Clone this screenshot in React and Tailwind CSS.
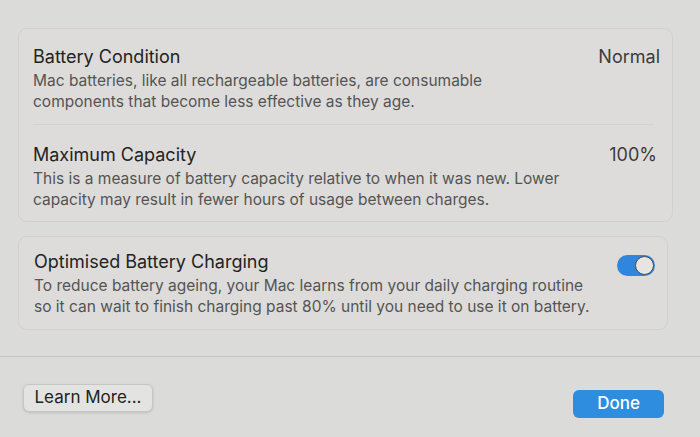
import React from 'react';

function Toggle() {
  return (
    <div className="w-[38px] h-[21px] rounded-full bg-[#2f86dc] flex items-center justify-end p-[1px]">
      <div className="w-[19px] h-[19px] rounded-full bg-[#e6e5e2] border border-[#4a4a4a]" />
    </div>
  );
}

function Row({ title, value, lines, right }) {
  return (
    <div className="flex justify-between">
      <div>
        <div className="text-[18px] leading-[22px] text-[#232323]">{title}</div>
        <div className="mt-[2px] text-[15.5px] leading-[21px] text-[#545454]">
          {lines.map((l) => (
            <div key={l}>{l}</div>
          ))}
        </div>
      </div>
      {value && <div className="text-[18px] leading-[22px] text-[#3c3c3c]">{value}</div>}
      {right}
    </div>
  );
}

export default function App() {
  return (
    <div
      className="w-[700px] h-[437px] bg-[#dbdbd9] overflow-hidden flex flex-col"
      style={{ fontFamily: 'Inter, "Noto Sans", sans-serif' }}
    >
      <div className="ml-[18px] mt-[28px] w-[655px] h-[194px] rounded-[9px] border border-[#d0d0cd] bg-[#dddcda] pl-[14px] pr-[12px] pt-[17px]">
        <Row
          title="Battery Condition"
          value="Normal"
          lines={[
            'Mac batteries, like all rechargeable batteries, are consumable',
            'components that become less effective as they age.',
          ]}
        />
        <div className="h-px bg-[#d2d2cf] mt-[12px] mr-[6px]" />
        <div className="pt-[19px] pr-[3px]">
          <Row
            title="Maximum Capacity"
            value="100%"
            lines={[
              'This is a measure of battery capacity relative to when it was new. Lower',
              'capacity may result in fewer hours of usage between charges.',
            ]}
          />
        </div>
      </div>

      <div className="ml-[18px] mt-[14px] w-[650px] h-[94px] rounded-[9px] border border-[#d0d0cd] bg-[#dddcda] pl-[15px] pr-[12px] pt-[14px]">
        <Row
          title="Optimised Battery Charging"
          lines={[
            'To reduce battery ageing, your Mac learns from your daily charging routine',
            'so it can wait to finish charging past 80% until you need to use it on battery.',
          ]}
          right={
            <div className="pt-[4px]">
              <Toggle />
            </div>
          }
        />
      </div>

      <div className="h-px bg-[#c4c4c1] mt-[26px]" />

      <div className="flex justify-between items-start pl-[23px] pr-[36px] pt-[27px]">
        <button className="w-[130px] h-[28px] rounded-[6px] border border-[#c6c6c3] bg-[#e3e3e1] text-[17px] text-[#222] shadow-sm">
          Learn More...
        </button>
        <button className="mt-[6px] w-[91px] h-[28px] rounded-[6px] bg-[#2e8ddf] text-[17px] text-white font-medium">
          Done
        </button>
      </div>
    </div>
  );
}
